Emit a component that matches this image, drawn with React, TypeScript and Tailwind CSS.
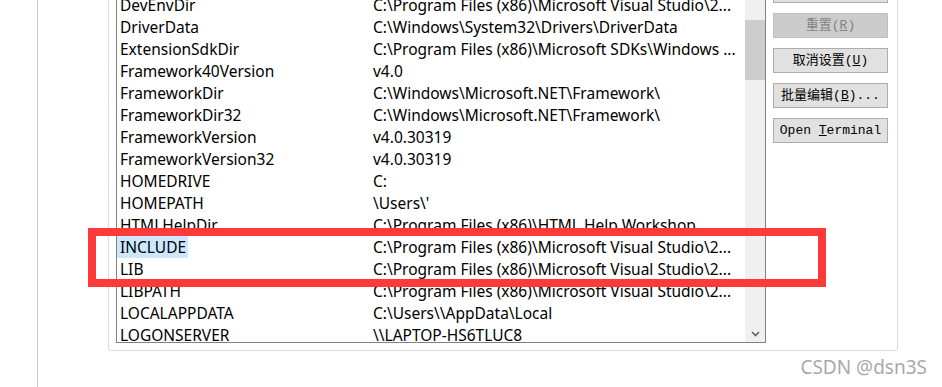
import React from 'react';

const rows: [string, string][] = [
  ['DevEnvDir', 'C:\\Program Files (x86)\\Microsoft Visual Studio\\2...'],
  ['DriverData', 'C:\\Windows\\System32\\Drivers\\DriverData'],
  ['ExtensionSdkDir', 'C:\\Program Files (x86)\\Microsoft SDKs\\Windows ...'],
  ['Framework40Version', 'v4.0'],
  ['FrameworkDir', 'C:\\Windows\\Microsoft.NET\\Framework\\'],
  ['FrameworkDir32', 'C:\\Windows\\Microsoft.NET\\Framework\\'],
  ['FrameworkVersion', 'v4.0.30319'],
  ['FrameworkVersion32', 'v4.0.30319'],
  ['HOMEDRIVE', 'C:'],
  ['HOMEPATH', "\\Users\\'"],
  ['HTMLHelpDir', 'C:\\Program Files (x86)\\HTML Help Workshop'],
  ['INCLUDE', 'C:\\Program Files (x86)\\Microsoft Visual Studio\\2...'],
  ['LIB', 'C:\\Program Files (x86)\\Microsoft Visual Studio\\2...'],
  ['LIBPATH', 'C:\\Program Files (x86)\\Microsoft Visual Studio\\2...'],
  ['LOCALAPPDATA', 'C:\\Users\\\\AppData\\Local'],
  ['LOGONSERVER', '\\\\LAPTOP-HS6TLUC8'],
];

const btnFont = { fontFamily: '"Liberation Mono", "Noto Sans CJK SC", monospace' };

function DialogButton({ children, disabled }: { children: React.ReactNode; disabled?: boolean }) {
  return (
    <div
      style={btnFont}
      className={`h-[25px] w-[115px] flex items-center justify-center border text-[13px] whitespace-pre ${
        disabled ? 'bg-[#cccccc] border-[#bfbfbf] text-[#838383]' : 'bg-[#e1e1e1] border-[#adadad] text-black'
      }`}
    >
      <span>{children}</span>
    </div>
  );
}

export default function App() {
  return (
    <div
      className="relative w-[942px] h-[387px] overflow-hidden bg-white flex"
      style={{ fontFamily: '"Noto Sans", "Noto Sans CJK SC", sans-serif' }}
    >
      {/* outer dialog edge */}
      <div className="w-[37px] shrink-0" />
      <div className="w-px h-full bg-[#c8c8c8] shrink-0" />

      {/* group box, scrolled so its top is out of view */}
      <div className="ml-[70px] mt-[-62px] w-[790px] h-[413px] border border-[#dcdcdc] rounded-[3px] flex pl-[7px] pt-[30px] pb-[7px] pr-[8px]">
        {/* list view */}
        <div className="w-[650px] h-full border border-[#828282] flex overflow-hidden">
          <div className="flex-1 flex flex-col overflow-hidden">
            <div className="h-[24px] shrink-0 flex text-[15.5px] leading-[24px] text-black">
              <div className="w-[256px] pl-[3px]">变量</div>
              <div className="pl-[3px]">值</div>
            </div>
            {rows.map(([name, value]) => {
              const selected = name === 'INCLUDE';
              return (
                <div key={name} className="h-[22px] shrink-0 flex text-[15.5px] leading-[22px] text-black whitespace-nowrap">
                  <div className="w-[256px]">
                    <span className={`inline-block pl-[3px] pr-[2px] ${selected ? 'bg-[#cce8ff]' : ''}`}>{name}</span>
                  </div>
                  <div>{value}</div>
                </div>
              );
            })}
          </div>
          {/* scrollbar */}
          <div className="w-[20px] h-full bg-[#f0f0f0] flex flex-col shrink-0">
            <div className="h-[17px] shrink-0" />
            <div className="flex-1 pt-[33px]">
              <div className="h-[60px] bg-[#cdcdcd]" />
            </div>
            <div className="h-[17px] shrink-0 flex items-center justify-center">
              <svg width="9" height="6" viewBox="0 0 9 6">
                <path d="M1 1 L4.5 4.5 L8 1" stroke="#606060" strokeWidth="1.6" fill="none" />
              </svg>
            </div>
          </div>
        </div>

        {/* buttons */}
        <div className="ml-[7px] flex flex-col gap-[10px] mt-[9px]">
          <DialogButton>删除(<u>D</u>)</DialogButton>
          <DialogButton disabled>重置(<u>R</u>)</DialogButton>
          <DialogButton>取消设置(<u>U</u>)</DialogButton>
          <DialogButton>批量编辑(<u>B</u>)...</DialogButton>
          <DialogButton>Open <u>T</u>erminal</DialogButton>
        </div>
      </div>

      {/* annotation box */}
      <div className="absolute left-[88px] top-[228px] w-[738px] h-[59px] border-[8px] border-[#fc3a3a]" />

      {/* watermark */}
      <div className="absolute right-[15px] bottom-[6px] text-[19px] text-[#a9a9a9]">CSDN @dsn3S</div>
    </div>
  );
}
